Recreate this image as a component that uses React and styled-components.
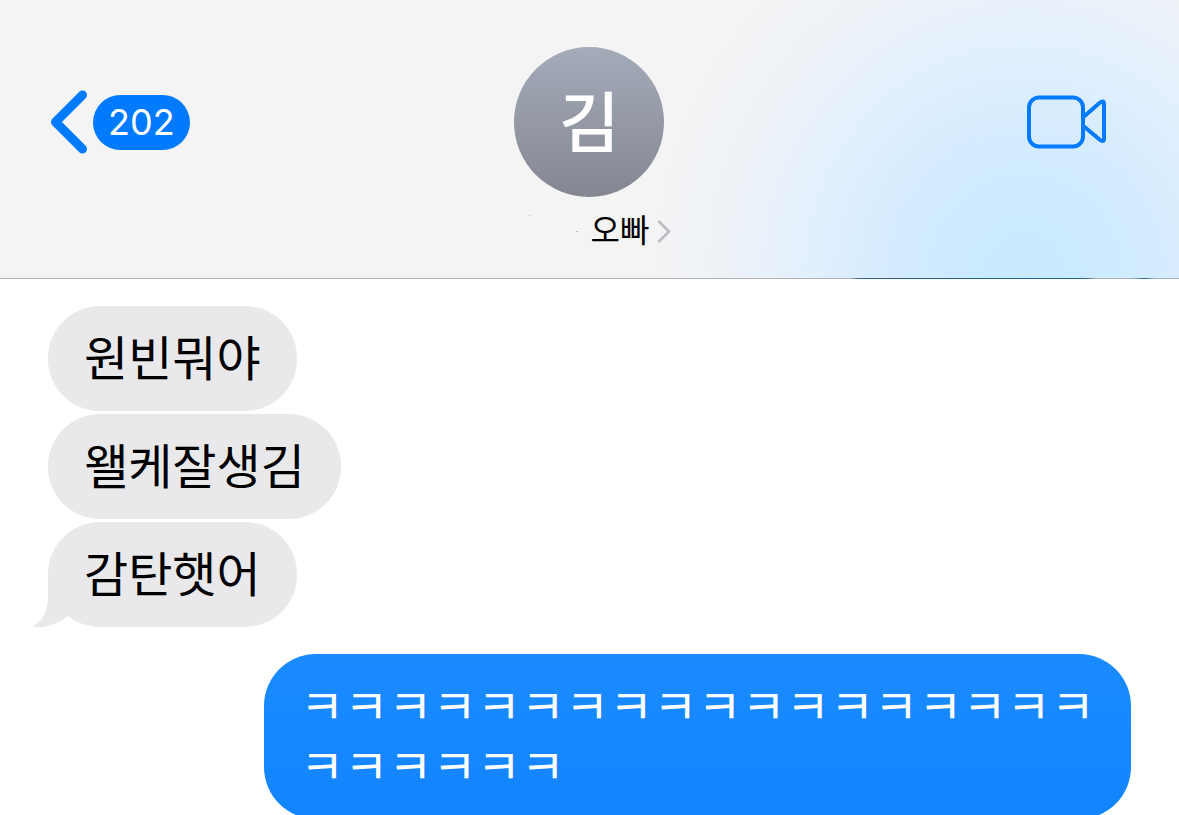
import React from 'react';
import styled, { createGlobalStyle, css } from 'styled-components';

const messages = [
  { id: 1, text: '원빈뭐야' },
  { id: 2, text: '왤케잘생김' },
  { id: 3, text: '감탄햇어', last: true },
  { id: 4, text: 'ㅋㅋㅋㅋㅋㅋㅋㅋㅋㅋㅋㅋㅋㅋㅋㅋㅋㅋㅋㅋㅋㅋㅋㅋ', mine: true },
];

const GlobalStyle = createGlobalStyle`
  * {
    box-sizing: border-box;
  }
  body {
    margin: 0;
    background: #fff;
    font-family: 'Noto Sans CJK KR', sans-serif;
    color: #000;
  }
  button {
    border: 0;
    padding: 0;
    background: none;
    font: inherit;
    color: inherit;
    cursor: pointer;
  }
`;

const Layout = styled.div`
  display: flex;
  flex-direction: column;
  height: 100vh;
`;

const Header = styled.header`
  flex: none;
  display: grid;
  grid-template-columns: 1fr auto 1fr;
  align-items: start;
  padding: 47px 72px 27px 50px;
  background:
    radial-gradient(ellipse 380px 400px at 87% 100%, #c8e9ff 0%, #cdeaff 20%, #d6ecfe 38%, #e0effe 54%, #e8f1fa 68%, #eef2f6 82%, rgba(244, 244, 245, 0) 100%),
    #f4f4f5;
`;

/* hairline under the header, with sent bubbles showing through it */
const Divider = styled.div`
  flex: none;
  height: 1px;
  background: linear-gradient(
    to right,
    #b2b2b4 72%, #2b6496 73%, #2b6496 92%, #a5b3bf 93%,
    #a5b3bf 96%, #2b6496 97%, #a5b3bf 98%
  );
`;

const BackButton = styled.button`
  display: flex;
  align-items: center;
  gap: 5px;
  height: 150px;
  justify-self: start;
`;

const Badge = styled.span`
  height: 55px;
  padding: 0 15px;
  border-radius: 28px;
  background: #007aff;
  color: #fff;
  font-family: Inter, sans-serif;
  font-size: 36px;
  line-height: 55px;
`;

const Contact = styled.button`
  display: flex;
  flex-direction: column;
  align-items: center;
  gap: 14px;
  /* evens out the side paddings so the avatar stays in the middle */
  margin: 0 -11px 0 11px;
`;

const Avatar = styled.span`
  width: 150px;
  height: 150px;
  border-radius: 50%;
  background: linear-gradient(#a4abb9, #848791);
  color: #fff;
  font-size: 66px;
  font-weight: 500;
  line-height: 142px;
  text-align: center;
`;

const Name = styled.span`
  display: flex;
  align-items: center;
  gap: 8px;
  height: 40px;
  font-size: 32px;
  line-height: 34px;
`;

const NameText = styled.span`
  height: 40px;
`;

const VideoButton = styled.button`
  display: flex;
  align-items: center;
  height: 150px;
  justify-self: end;
`;

const Thread = styled.main`
  flex: 1;
  min-height: 0;
  display: flex;
  flex-direction: column;
  align-items: flex-start;
  gap: 3px;
  padding: 27px 48px;
  overflow-y: auto;
  scrollbar-width: none;
`;

const Bubble = styled.div`
  position: relative;
  flex: none;
  max-width: 867px;
  padding: 19px 36px 26px;
  border-radius: 52px;
  background: #e9e9eb;
  font-size: 48px;
  line-height: 60px;
  word-break: break-all;
  ${({ $mine }) => $mine && css`
    align-self: flex-end;
    margin-top: 24px;
    background: linear-gradient(#1a8bff, #1284ff);
    color: #fff;
  `}
`;

const TailShape = styled.svg`
  position: absolute;
  left: -16px;
  bottom: 0;
`;

const Text = styled.span`
  position: relative;
`;

const BackIcon = () =>
  <svg width='38' height='64' viewBox='0 0 38 64' fill='none' aria-hidden='true'>
    <path d='M32.500 5 L5.500 32 L32.500 59' stroke='#007aff' strokeWidth='9' strokeLinecap='round' strokeLinejoin='round' />
  </svg>;

const VideoIcon = () =>
  <svg width='80' height='54' viewBox='0 0 80 54' fill='none' stroke='#007aff' strokeWidth='4' aria-hidden='true'>
    <rect x='2' y='2.500' width='54' height='49' rx='10' />
    <path d='M57 21.500 L72.500 8 Q77 4.500 77 9 V43.500 Q77 48 72.500 44.500 L57 31.500' strokeLinejoin='round' />
  </svg>;

const Chevron = () =>
  <svg width='15' height='24' viewBox='0 0 15 24' fill='none' aria-hidden='true'>
    <path d='M1.500 2 L12 12.500 L1.500 23' stroke='#bcbcc0' strokeWidth='2.500' />
  </svg>;

/* what is left of the wiped-out first name */
const HiddenName = () =>
  <svg width='76' height='40' viewBox='0 0 76 40' fill='#b4b4b6' aria-hidden='true'>
    <rect x='22' y='4' width='1' height='1' />
    <rect x='69' y='20' width='2' height='1' />
  </svg>;

const Tail = () =>
  <TailShape width='76' height='52' viewBox='0 0 76 52' fill='#e9e9eb' aria-hidden='true'>
    <path d='M16 0 V20 C16 36 11 47 0 51 C13 54 26 49 36 41 L76 20 V0 Z' />
  </TailShape>;

const App = () =>
  <Layout>
    <GlobalStyle />
    <Header>
      <BackButton aria-label='뒤로'>
        <BackIcon />
        <Badge>202</Badge>
      </BackButton>
      <Contact>
        <Avatar>김</Avatar>
        <Name>
          <HiddenName />
          <NameText>오빠</NameText>
          <Chevron />
        </Name>
      </Contact>
      <VideoButton aria-label='영상 통화'>
        <VideoIcon />
      </VideoButton>
    </Header>
    <Divider />
    <Thread>
      {messages.map(m =>
        <Bubble key={m.id} $mine={m.mine}>
          {m.last && <Tail />}
          <Text>{m.text}</Text>
        </Bubble>
      )}
    </Thread>
  </Layout>;

export default App;
